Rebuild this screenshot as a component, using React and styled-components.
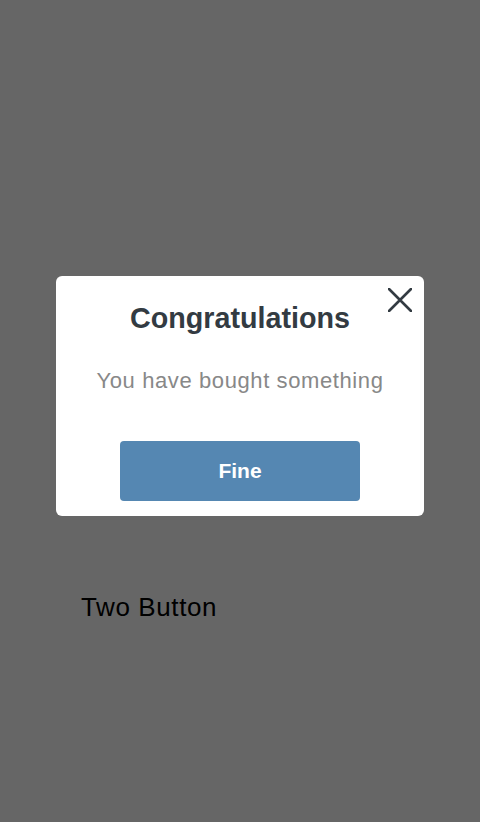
import React from "react";
import styled, { createGlobalStyle } from "styled-components";

const GlobalStyle = createGlobalStyle`
  html, body {
    margin: 0;
    padding: 0;
    background: #fff;
    font-family: "Liberation Sans", Arial, sans-serif;
  }
`;

const Page = styled.div`
  min-height: 822px;
  padding: 591px 0 0 81px;
  box-sizing: border-box;
`;

const Label = styled.div`
  font-size: 26px;
  line-height: 32px;
  letter-spacing: 0.6px;
  color: #000;
`;

const Overlay = styled.div`
  position: fixed;
  inset: 0;
  background: rgba(0, 0, 0, 0.6);
  display: flex;
  align-items: center;
  justify-content: center;
  padding-bottom: 30px;
  box-sizing: border-box;
`;

const Dialog = styled.div`
  position: relative;
  width: 368px;
  height: 240px;
  background: #fff;
  border-radius: 6px;
  box-sizing: border-box;
  padding-top: 25px;
  display: flex;
  flex-direction: column;
  align-items: center;
`;

const Title = styled.h2`
  margin: 0;
  font-size: 28.7px;
  line-height: 34px;
  font-weight: 700;
  color: #333b42;
`;

const Message = styled.p`
  margin: 33px 0 0;
  font-size: 22px;
  line-height: 26px;
  letter-spacing: 0.6px;
  color: #888;
`;

const Button = styled.button`
  margin-top: 47px;
  width: 240px;
  height: 60px;
  border: none;
  border-radius: 4px;
  background: #5587b2;
  color: #fff;
  font-family: inherit;
  font-size: 21px;
  font-weight: 700;
  cursor: pointer;
`;

const Close = styled.button`
  position: absolute;
  top: 12px;
  right: 12px;
  width: 24px;
  height: 24px;
  padding: 0;
  border: none;
  background: none;
  cursor: pointer;
  display: flex;
`;

const App = () => (
  <>
    <GlobalStyle />
    <Page>
      <Label>Two Button</Label>
    </Page>
    <Overlay>
      <Dialog>
        <Close aria-label="close">
          <svg width="24" height="24" viewBox="0 0 24 24">
            <path
              d="M1 1L23 23M23 1L1 23"
              stroke="#333b42"
              strokeWidth="2.6"
              strokeLinecap="round"
            />
          </svg>
        </Close>
        <Title>Congratulations</Title>
        <Message>You have bought something</Message>
        <Button>Fine</Button>
      </Dialog>
    </Overlay>
  </>
);

export default App;
